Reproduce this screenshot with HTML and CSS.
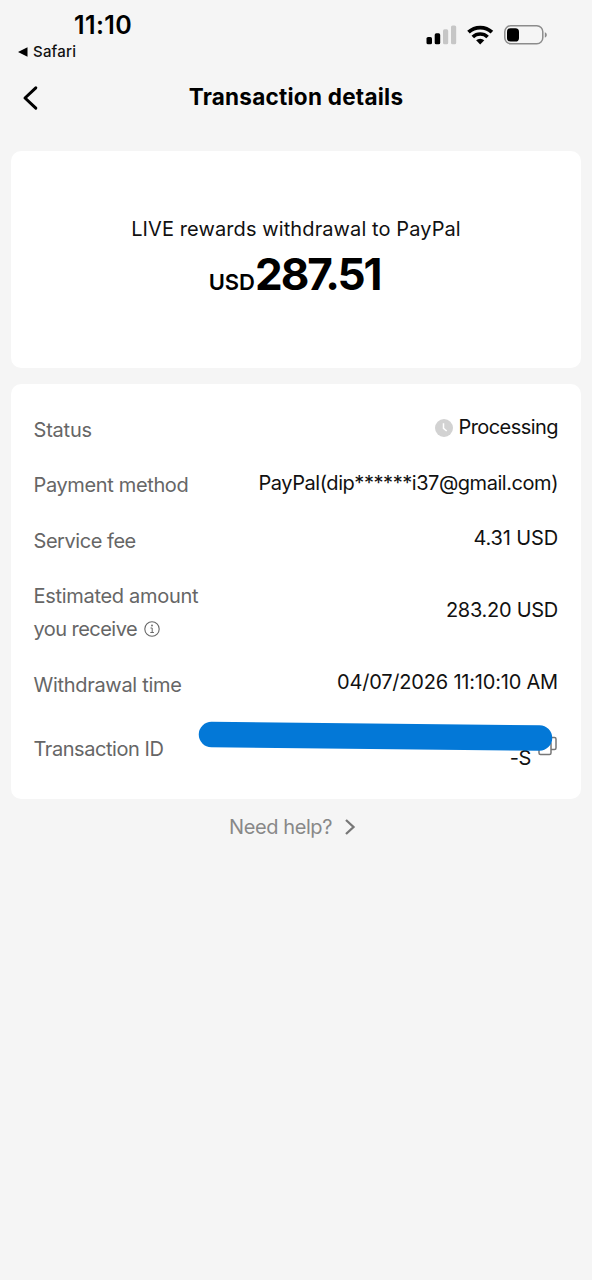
FILE: index.html
```html
<!DOCTYPE html>
<html lang="en">
<head>
<meta charset="utf-8">
<title>Transaction details</title>
<link rel="stylesheet" href="styles.css">
</head>
<body>
<div class="statusbar">
  <div class="status-left">
    <div class="clock">11:10</div>
    <div class="return-app">
      <svg width="10" height="10" viewBox="0 0 10 10"><path d="M0 5 9.500 .3v9.400z" fill="#000"/></svg>
      <span>Safari</span>
    </div>
  </div>
  <svg class="status-icons" width="122" height="22" viewBox="0 0 122 22">
    <rect x=".5" y="13" width="5.5" height="7.3" rx="1.6"/>
    <rect x="8.7" y="9.3" width="5.5" height="11" rx="1.6"/>
    <g fill="#c6c6c6"><rect x="17" y="5.3" width="5.2" height="15" rx="1.6"/><rect x="25" y="1.5" width="5.2" height="18.8" rx="1.6"/></g>
    <g fill="none" stroke="#000" stroke-width="3.8">
      <path d="M42.5 8.2a17 17 0 0 1 23.4 0"/>
      <path d="M46.8 13a10.7 10.7 0 0 1 14.8 0" stroke-width="3.6"/>
    </g>
    <path d="M50.1 16.3a6.2 6.2 0 0 1 8.2 0l-4.1 4.1z"/>
    <rect x="78.8" y="1.8" width="38" height="18" rx="6" fill="none" stroke="#8c8c8c" stroke-width="1.5"/>
    <rect x="81" y="4.3" width="12" height="13.2" rx="3.6"/>
    <path d="M118.8 8.2c2.7 1 2.7 4.4 0 5.4z" fill="#8c8c8c"/>
  </svg>
</div>
<header class="nav">
  <svg class="back" width="18" height="26" viewBox="0 0 18 26"><path d="M14.8 2.8 4 13l10.800 10.200" fill="none" stroke="#000" stroke-width="3" stroke-linecap="round" stroke-linejoin="round"/></svg>
  <h1>Transaction details</h1>
</header>
<main>
  <section class="card summary">
    <p class="caption">LIVE rewards withdrawal to PayPal</p>
    <p class="amount"><span class="currency">USD</span><span class="number">287.51</span></p>
  </section>
  <section class="card details">
    <div class="row">
      <span class="label l-status">Status</span>
      <span class="value v-status"><svg width="18" height="18" viewBox="0 0 18 18"><circle cx="9" cy="9" r="9" fill="#d2d2d2"/><path d="M8.500 4.300v5l3.200 2.700" fill="none" stroke="#fff" stroke-width="1.500"/></svg><span class="v-processing">Processing</span></span>
    </div>
    <div class="row"><span class="label l-method">Payment method</span><span class="value v-method">PayPal(dip******i37@gmail.com)</span></div>
    <div class="row"><span class="label l-fee">Service fee</span><span class="value v-fee">4.31 USD</span></div>
    <div class="row">
      <span class="label l-amount">Estimated amount<br><span class="l-receive">you receive</span> <svg class="info" width="16" height="16" viewBox="0 0 16 16"><circle cx="8" cy="8" r="7.200" fill="none" stroke="#666" stroke-width="1.100"/><path d="M6.500 7h1.700v4.500M6.300 11.500h3.600" fill="none" stroke="#666"/><circle cx="8" cy="4.500" r=".9" fill="#666"/></svg></span>
      <span class="value v-amount">283.20 USD</span>
    </div>
    <div class="row"><span class="label l-time">Withdrawal time</span><span class="value v-time">04/07/2026 11:10:10 AM</span></div>
    <div class="row id-row">
      <span class="label l-id">Transaction ID</span>
      <span class="value v-id"><span class="id-text"><br>-S</span><svg class="copy" width="19" height="20" viewBox="0 0 19 20" fill="none" stroke="#777" stroke-width="1.500"><path d="M6 5V3q0-1.500 1.500-1.500H16.500Q18 1.500 18 3v9q0 1.500-1.500 1.500H13"/><rect x="1" y="6" width="12" height="12.500" rx="1.500"/></svg></span>
      <svg class="redaction" width="358" height="34" viewBox="0 0 358 34"><path d="M14.500 14.500 342.500 18" stroke="#0378d7" stroke-width="25.500" stroke-linecap="round"/></svg>
    </div>
  </section>
  <div class="help"><span>Need help?</span><svg width="12" height="18" viewBox="0 0 12 18"><path d="m2 2 7.500 7L2 16" fill="none" stroke="#777" stroke-width="2.300"/></svg></div>
</main>
</body>
</html>
```
FILE: styles.css
```css
* { box-sizing: border-box; }
body { margin: 0; min-height: 1280px; background: #f5f5f5; color: #111; font-family: Inter, "Liberation Sans", sans-serif; font-size: 20px; }
h1, p { margin: 0; }
svg { display: block; flex: none; }
.statusbar { height: 68px; padding: 10px 44px 0 18px; display: flex; justify-content: space-between; align-items: flex-start; }
.clock { padding-left: 56px; font-size: 25px; line-height: 31px; font-weight: 600; color: #000; letter-spacing: .4px; }
.return-app { display: flex; align-items: center; gap: 5px; font-size: 15px; line-height: 22px; font-weight: 500; color: #111; letter-spacing: .2px; }
.status-icons { margin-top: 14px; }
.nav { height: 83px; padding: 0 21px; display: grid; grid-template-columns: 18px 1fr 18px; align-items: start; }
.back { margin-top: 17px; }
h1 { padding-top: 14px; text-align: center; font-size: 22.5px; line-height: 30px; font-weight: 700; color: #000; letter-spacing: .25px; }
main { padding: 0 11px; display: flex; flex-direction: column; }
.card { background: #fff; border-radius: 10px; }
.summary { height: 217px; padding-top: 63px; text-align: center; }
.caption { line-height: 31px; letter-spacing: .1px; }
.amount { display: flex; justify-content: center; align-items: baseline; padding-right: 3px; line-height: 59px; color: #000; }
.currency { font-size: 22px; font-weight: 600; }
.number { font-size: 44px; font-weight: 700; letter-spacing: -2.1px; }
.details { margin-top: 16px; height: 415px; padding: 30px 23px 0 22.5px; display: flex; flex-direction: column; gap: 22.200px; }
.row { position: relative; display: flex; justify-content: space-between; align-items: center; }
.label { color: #666; line-height: 33.200px; white-space: nowrap; }
.value { display: flex; align-items: center; line-height: 25px; margin-bottom: 5.5px; text-align: right; white-space: nowrap; }
.l-status { letter-spacing: -.2px; }
.l-method { letter-spacing: -.36px; }
.l-fee { letter-spacing: -.45px; }
.l-amount { letter-spacing: -.3px; }
.l-receive { letter-spacing: -.55px; }
.l-time { letter-spacing: -.3px; }
.l-id { letter-spacing: -.45px; }
.v-status { gap: 5px; }
.v-processing { letter-spacing: -.55px; }
.v-method { letter-spacing: -.45px; }
.v-fee { letter-spacing: -.15px; }
.v-amount { letter-spacing: -.27px; }
.v-time { letter-spacing: -.2px; }
.info { display: inline-block; vertical-align: -1px; margin-left: 2px; }
.id-row { height: 50px; }
.v-id { gap: 7px; margin-right: 1px; }
.id-text { display: block; letter-spacing: -.4px; }
.redaction { position: absolute; left: 163.5px; top: -4px; }
.help { display: flex; justify-content: center; align-items: center; gap: 12px; padding: 13px 7px 0 0; line-height: 30px; color: #888; letter-spacing: -.4px; }
```
